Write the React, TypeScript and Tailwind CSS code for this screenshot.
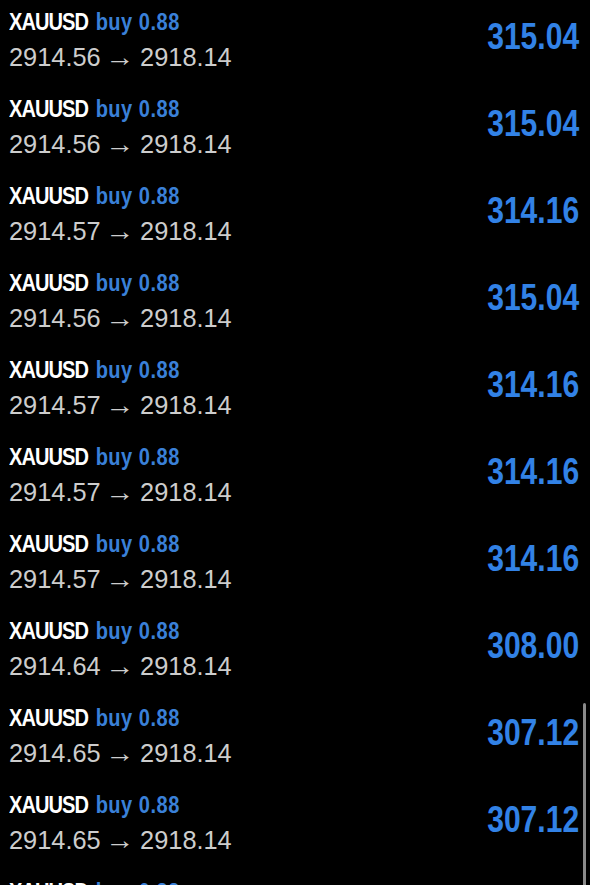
import React from "react";

const rows: [string, string][] = [
  ["2914.56", "315.04"],
  ["2914.56", "315.04"],
  ["2914.57", "314.16"],
  ["2914.56", "315.04"],
  ["2914.57", "314.16"],
  ["2914.57", "314.16"],
  ["2914.57", "314.16"],
  ["2914.64", "308.00"],
  ["2914.65", "307.12"],
  ["2914.65", "307.12"],
  ["2914.65", "307.12"],
];

export default function App() {
  return (
    <div className="relative h-[885px] w-[590px] overflow-hidden bg-black font-['Liberation_Sans',Arial,sans-serif]">
      <div className="flex flex-col">
        {rows.map(([open, profit], i) => (
          <div key={i} className="flex h-[87px] shrink-0 items-start justify-between pl-[9px] pr-[11px]">
            <div className="flex flex-col items-start pt-[8px]">
              <div className="flex origin-left scale-x-[0.835] whitespace-nowrap text-[24px] font-bold leading-[28px]">
                <span className="tracking-[-1.1px] text-white">XAUUSD</span>
                <span className="ml-[9px] tracking-[0.6px] text-[#3a80d8]">buy 0.88</span>
              </div>
              <div className="mt-[6px] origin-left scale-x-[0.975] whitespace-nowrap text-[26px] leading-[30px] text-[#cdcdcd]">
                {open} <span className="inline-block scale-x-[1.15]">→</span> 2918.14
              </div>
            </div>
            <div className="mt-[19px] origin-right scale-x-[0.835] text-[36px] font-bold leading-[36px] text-[#3282e6]">
              {profit}
            </div>
          </div>
        ))}
      </div>
      <div className="absolute right-[4px] top-[703px] h-[190px] w-[3px] rounded-full bg-[#8a8a8a]" />
    </div>
  );
}
